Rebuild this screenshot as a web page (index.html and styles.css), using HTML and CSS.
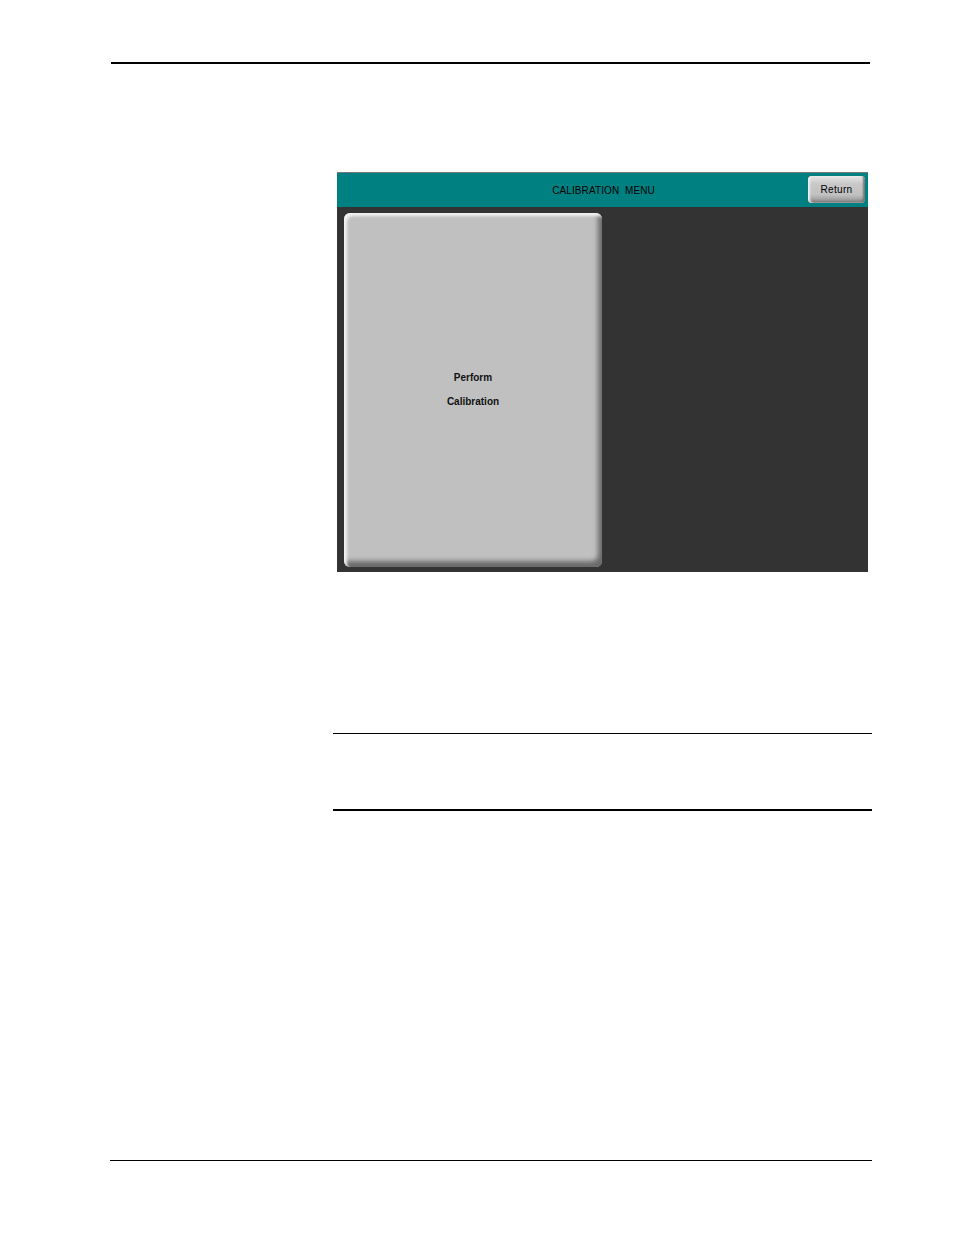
FILE: index.html
```html
<!DOCTYPE html>
<html>
<head>
<meta charset="utf-8">
<link rel="stylesheet" href="styles.css">
</head>
<body>
<div class="page">
  <div class="top-rule"></div>
  <div class="content">
    <div class="screen">
      <div class="header">
        <span class="title">CALIBRATION&nbsp; MENU</span>
        <div class="return">Return</div>
      </div>
      <div class="body">
        <div class="big-btn">
          <span>Perform</span>
          <span>Calibration</span>
        </div>
      </div>
    </div>
    <div class="note">
      <div class="note-top"></div>
      <div class="note-bottom"></div>
    </div>
  </div>
  <div class="footer-rule"></div>
</div>
</body>
</html>
```
FILE: styles.css
```css
html, body {
  margin: 0;
  padding: 0;
  background: #ffffff;
  font-family: "Liberation Sans", Arial, sans-serif;
}
.page {
  width: 954px;
  height: 1235px;
  position: relative;
  display: flex;
  flex-direction: column;
}
.top-rule {
  margin: 62px 0 0 111px;
  width: 759px;
  height: 2px;
  background: #000;
}
.content {
  margin-left: 333px;
  width: 539px;
  display: flex;
  flex-direction: column;
}
.screen {
  margin: 108px 0 0 4px;
  width: 531px;
  height: 400px;
  border-top: 1px solid #777;
  box-sizing: border-box;
  display: flex;
  flex-direction: column;
  background: #333333;
}
.header {
  height: 34px;
  background: #008080;
  position: relative;
  display: flex;
  align-items: center;
  justify-content: center;
}
.title {
  font-size: 10px;
  color: #000;
  margin-left: 2px;
  padding-top: 1px;
  letter-spacing: 0.1px;
}
.return {
  position: absolute;
  right: 3px;
  top: 3px;
  width: 57px;
  height: 27px;
  box-sizing: border-box;
  border-radius: 4px;
  background: linear-gradient(to bottom, #e6e6e6 0%, #c8c8c8 30%, #c0c0c0 70%, #8a8a8a 100%);
  box-shadow: inset 2px 0 2px #eee, inset -2px -2px 2px #777;
  font-size: 10px;
  letter-spacing: 0.3px;
  display: flex;
  align-items: center;
  justify-content: center;
  color: #000;
}
.body {
  flex: 1;
  padding: 6px 0 0 7px;
}
.big-btn {
  width: 258px;
  height: 354px;
  box-sizing: border-box;
  border-radius: 6px;
  background: #c0c0c0;
  box-shadow:
    inset 3px 3px 3px #f2f2f2,
    inset -4px -6px 5px #6a6a6a;
  display: flex;
  flex-direction: column;
  align-items: center;
  justify-content: center;
  gap: 13px;
  font-size: 10px;
  font-weight: bold;
  color: #111;
  padding-bottom: 2px;
}
.note {
  margin-top: 161px;
  display: flex;
  flex-direction: column;
}
.note-top {
  height: 1px;
  background: #000;
}
.note-bottom {
  margin-top: 75px;
  height: 2px;
  background: #000;
}
.footer-rule {
  margin: 349px 0 0 110px;
  width: 762px;
  height: 1px;
  background: #000;
}
```
